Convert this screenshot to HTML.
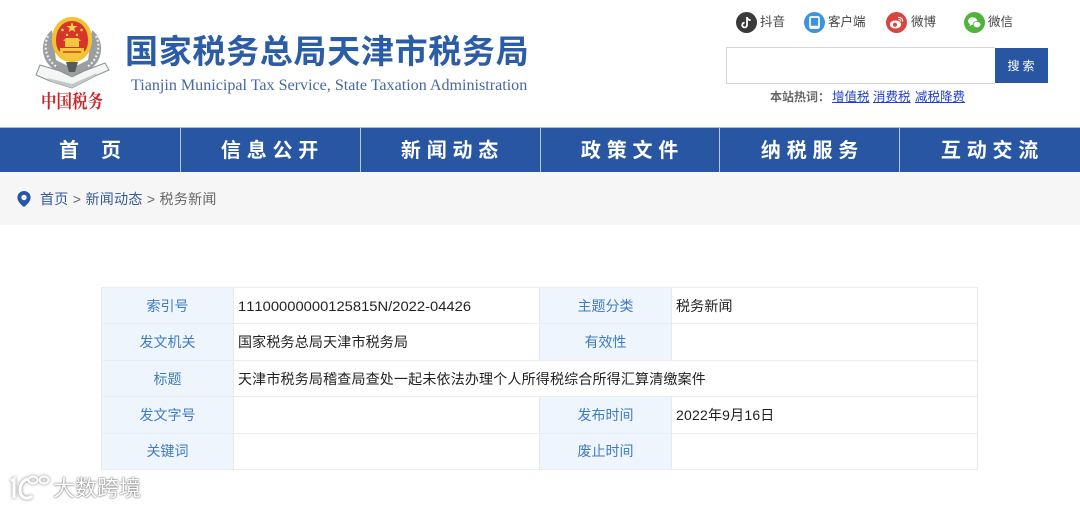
<!DOCTYPE html>
<html lang="zh">
<head>
<meta charset="utf-8">
<title>国家税务总局天津市税务局</title>
<style>
html,body{margin:0;padding:0;background:#fff;}
body{width:1080px;height:508px;position:relative;overflow:hidden;font-family:"Liberation Sans","Noto Sans CJK SC",sans-serif;}
.a{position:absolute;white-space:nowrap;}
.nav{position:absolute;left:0;top:127px;width:1080px;height:45px;background:#2856a3;border-top:1px solid #a9bedd;box-sizing:border-box;}
.nav div{position:absolute;top:0;height:44px;line-height:47px;text-align:center;color:#fff;font-size:20px;font-weight:700;letter-spacing:5.8px;text-indent:4px;}
.nav i{position:absolute;top:0;width:1px;height:44px;background:#b7c9e4;}
.crumb{position:absolute;left:0;top:172px;width:1080px;height:53px;background:#f6f6f6;}
.t{position:absolute;box-sizing:border-box;height:36px;line-height:36px;font-size:14px;white-space:nowrap;letter-spacing:.18px;}
.l{background:#eef5fd;color:#3f7cc4;text-align:center;letter-spacing:0;}
.v{color:#222;padding-left:5px;}
.hl{position:absolute;background:#e9edf0;height:1px;}
.vl{position:absolute;background:#e6eaee;width:1px;}
.top{font-size:12.5px;color:#444;}
.hot{font-size:12.5px;line-height:17px;color:#1f3fd0;text-decoration:underline;top:89px;}
</style>
</head>
<body>
<!-- emblem -->
<svg class="a" style="left:0;top:0" width="120" height="92" viewBox="0 0 120 92">
  <path d="M52 30C39 40 39 62 58 72L72 76L86 72C105 62 105 40 92 30L88 60L72 68L56 60Z" fill="#9a9ea0"/>
  <path d="M48 36C43 46 46 60 57 67M96 36C101 46 98 60 87 67" stroke="#eceeee" stroke-width="2.2" stroke-dasharray="2 2" fill="none"/>
  <path d="M36 75L40 65L60 71L72 77L84 71L105 63L109 70L95 76L72 88L50 81Z" fill="#f4f5f5" stroke="#8d9193" stroke-width="1"/>
  <path d="M47 78L72 84L97 73L95 76L72 88L50 81Z" fill="#c4c7c7"/>
  <path d="M66 62H78L75 72H69Z" fill="#55595b"/>
  <path d="M72 17C84 17 92 27 92 40C92 52 84 62 72 62C60 62 52 52 52 40C52 27 60 17 72 17Z" fill="#f1c232"/>
  <path d="M72 21C82 21 88 30 88 40C88 45 87 49 84 52H60C57 49 56 45 56 40C56 30 62 21 72 21Z" fill="#d8352a"/>
  <path d="M65 47V41H79V47Z" fill="#f3c63e"/><path d="M63 41H81L78 38H66Z" fill="#f3c63e"/>
  <path d="M60 48H84V52L78 59H66L60 52Z" fill="#f3c63e"/><path d="M63 52H81" stroke="#c9452a" stroke-width="1.4"/>
  <path d="M72 22L73.4 26H77.5L74.2 28.4L75.4 32.2L72 29.9L68.6 32.2L69.8 28.4L66.5 26H70.6Z" fill="#f6d34a"/>
  <circle cx="62.5" cy="30" r="1.3" fill="#f6d34a"/><circle cx="81.5" cy="30" r="1.3" fill="#f6d34a"/>
  <circle cx="67" cy="35" r="1.2" fill="#f6d34a"/><circle cx="77" cy="35" r="1.2" fill="#f6d34a"/>
</svg>
<div class="a" style="left:41px;top:90px;font-family:'Noto Serif CJK SC',serif;font-weight:700;font-size:15.5px;color:#c8282b;line-height:22px;transform:scaleY(1.2);transform-origin:0 50%;">中国税务</div>

<div class="a" style="left:125px;top:31px;font-size:33px;line-height:42px;font-weight:700;color:#2b5ca8;letter-spacing:.7px;">国家税务总局天津市税务局</div>
<div class="a" style="left:131px;top:76px;font-family:'Liberation Serif',serif;font-size:16.08px;line-height:20px;color:#46689f;">Tianjin Municipal Tax Service, State Taxation Administration</div>

<!-- top icons -->
<svg class="a" style="left:736px;top:12px" width="21" height="21" viewBox="0 0 21 21"><circle cx="10.5" cy="10.5" r="10.5" fill="#3a3a3a"/><path d="M11 5V13A2.4 2.4 0 1 1 8.6 10.6M11 5.2C11.4 7 12.6 8 14.6 8.2" stroke="#fff" stroke-width="1.8" fill="none"/></svg>
<div class="a top" style="left:760px;top:14px;line-height:17px;">抖音</div>
<svg class="a" style="left:804px;top:12px" width="21" height="21" viewBox="0 0 21 21"><circle cx="10.5" cy="10.5" r="10.5" fill="#3d94dc"/><rect x="6" y="5" width="9" height="11" rx="1.2" fill="none" stroke="#fff" stroke-width="1.7"/><path d="M7 14.5H14" stroke="#fff" stroke-width="1.5"/></svg>
<div class="a top" style="left:828px;top:14px;line-height:17px;">客户端</div>
<svg class="a" style="left:886px;top:12px" width="21" height="21" viewBox="0 0 21 21"><circle cx="10.5" cy="10.5" r="10.5" fill="#d9463f"/><ellipse cx="9.5" cy="12.5" rx="5.6" ry="4" fill="#fff"/><circle cx="9" cy="12.8" r="2" fill="#d9463f"/><path d="M12 5.5C15 5 17 7 16.5 9.5M12.5 7.6C14 7.4 14.8 8.2 14.6 9.4" stroke="#fff" stroke-width="1.1" fill="none"/></svg>
<div class="a top" style="left:911px;top:14px;line-height:17px;">微博</div>
<svg class="a" style="left:964px;top:12px" width="21" height="21" viewBox="0 0 21 21"><circle cx="10.5" cy="10.5" r="10.5" fill="#4fb43c"/><ellipse cx="8.6" cy="9" rx="4.6" ry="3.8" fill="#fff"/><ellipse cx="13" cy="12.6" rx="3.9" ry="3.2" fill="#fff" stroke="#4fb43c" stroke-width=".8"/><path d="M6 12L5.5 14.2L8 12.6Z" fill="#fff"/></svg>
<div class="a top" style="left:988px;top:14px;line-height:17px;">微信</div>

<!-- search -->
<div class="a" style="left:726px;top:47px;width:269px;height:37px;box-sizing:border-box;border:1px solid #d3d5d9;border-right:0;background:#fff;"></div>
<div class="a" style="left:995px;top:48px;width:53px;height:35px;background:#2856a3;color:#fff;font-size:12px;line-height:37px;text-align:center;letter-spacing:3px;text-indent:2px;">搜索</div>
<div class="a" style="left:770px;top:89px;font-size:12px;line-height:17px;color:#666;font-weight:700;">本站热词：</div>
<div class="a hot" style="left:832px;">增值税</div>
<div class="a hot" style="left:873px;">消费税</div>
<div class="a hot" style="left:915px;">减税降费</div>

<!-- nav -->
<div class="nav">
  <div style="left:0;width:180px;letter-spacing:0;text-indent:0;">首<span style="display:inline-block;width:22px"></span>页</div><i style="left:180px"></i>
  <div style="left:181px;width:179px;">信息公开</div><i style="left:360px"></i>
  <div style="left:361px;width:179px;">新闻动态</div><i style="left:540px"></i>
  <div style="left:541px;width:179px;">政策文件</div><i style="left:719px"></i>
  <div style="left:721px;width:179px;">纳税服务</div><i style="left:899px"></i>
  <div style="left:901px;width:179px;">互动交流</div>
</div>

<!-- breadcrumb -->
<div class="crumb"></div>
<svg class="a" style="left:16px;top:190px" width="16" height="18" viewBox="0 0 16 18"><path d="M8 1A6.6 6.6 0 0 0 1.4 7.6C1.4 11.5 5.4 15 8 17C10.6 15 14.6 11.5 14.6 7.6A6.6 6.6 0 0 0 8 1Z" fill="#2856a3"/><circle cx="8" cy="7.5" r="2.7" fill="#f6f6f6"/></svg>
<div class="a" style="left:40px;top:189px;font-size:14px;line-height:20px;color:#666;letter-spacing:.3px;"><span style="color:#35599a">首页</span> &gt; <span style="color:#35599a">新闻动态</span> &gt; 税务新闻</div>

<!-- table -->
<div class="t l" style="left:102px;top:288px;width:131px;">索引号</div>
<div class="t v" style="left:233px;top:288px;width:306px;font-kerning:none;letter-spacing:0;"><span style="display:inline-block;transform:scaleX(1.054);transform-origin:0 50%;">11100000000125815N/2022-04426</span></div>
<div class="t l" style="left:540px;top:288px;width:131px;">主题分类</div>
<div class="t v" style="left:671px;top:288px;width:306px;">税务新闻</div>

<div class="t l" style="left:102px;top:324px;width:131px;">发文机关</div>
<div class="t v" style="left:233px;top:324px;width:306px;">国家税务总局天津市税务局</div>
<div class="t l" style="left:540px;top:324px;width:131px;">有效性</div>

<div class="t l" style="left:102px;top:361px;width:131px;">标题</div>
<div class="t v" style="left:233px;top:361px;width:700px;">天津市税务局稽查局查处一起未依法办理个人所得税综合所得汇算清缴案件</div>

<div class="t l" style="left:102px;top:397px;width:131px;">发文字号</div>
<div class="t l" style="left:540px;top:397px;width:131px;">发布时间</div>
<div class="t v" style="left:671px;top:397px;width:306px;letter-spacing:.2px;">2022年9月16日</div>

<div class="t l" style="left:102px;top:433px;width:131px;">关键词</div>
<div class="t l" style="left:540px;top:433px;width:131px;">废止时间</div>

<div class="hl" style="left:101px;top:287px;width:877px"></div>
<div class="hl" style="left:101px;top:323px;width:877px"></div>
<div class="hl" style="left:101px;top:360px;width:877px"></div>
<div class="hl" style="left:101px;top:396px;width:877px"></div>
<div class="hl" style="left:101px;top:433px;width:877px"></div>
<div class="hl" style="left:101px;top:469px;width:877px"></div>
<div class="vl" style="left:101px;top:287px;height:183px"></div>
<div class="vl" style="left:233px;top:287px;height:183px"></div>
<div class="vl" style="left:977px;top:287px;height:183px"></div>
<div class="vl" style="left:539px;top:287px;height:73px"></div>
<div class="vl" style="left:671px;top:287px;height:73px"></div>
<div class="vl" style="left:539px;top:397px;height:73px"></div>
<div class="vl" style="left:671px;top:397px;height:73px"></div>

<!-- watermark -->
<svg class="a" style="left:8px;top:472px;filter:drop-shadow(0 0 1.5px rgba(0,0,0,.5))" width="46" height="32" viewBox="0 0 46 32" fill="none" stroke="#fff" stroke-width="3"><path d="M3 9L6 7V26"/><path d="M20 7C11 9 10 22 15 25C18 27 22 26 24 24"/><ellipse cx="25" cy="8" rx="4.5" ry="3.4" stroke-width="1.9"/><ellipse cx="36" cy="8" rx="4.5" ry="3.4" stroke-width="1.9"/></svg>
<div class="a" style="left:53px;top:477px;font-size:22px;line-height:24px;color:#fff;text-shadow:0 0 2px rgba(0,0,0,.55),0 0 1px rgba(0,0,0,.5);">大数跨境</div>
</body>
</html>
